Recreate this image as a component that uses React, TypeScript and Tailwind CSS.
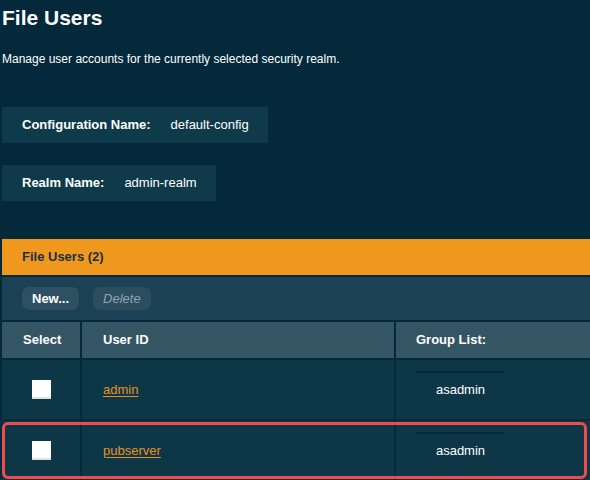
import React from 'react';

const font = "font-['Liberation_Sans',Arial,sans-serif]";

const InfoBox: React.FC<{ label: string; value: string }> = ({ label, value }) => (
    <div className="inline-flex items-center h-[36px] pl-[20px] pr-[19px] bg-[#0e3a4a] text-[13px]">
        <span className="font-bold">{label}</span>
        <span className="ml-[20px]">{value}</span>
    </div>
);

const Checkbox: React.FC = () => (
    <div className="w-[19px] h-[19px] bg-white shadow-[inset_0_-2px_1px_rgba(0,0,0,0.12)]"></div>
);

const UserRow: React.FC<{ id: string; group: string; highlight?: boolean }> = ({ id, group, highlight }) => (
    <div className="relative grid grid-cols-[78px_312px_1fr] gap-[2px] h-[59px]">
        <div className="bg-[#0d3747] flex items-center justify-center">
            <Checkbox />
        </div>
        <div className="bg-[#0d3747] flex items-center pl-[21px] text-[13px]">
            <a href="#" className="text-[#ea8f22] underline underline-offset-[2px]">{id}</a>
        </div>
        <div className="bg-[#0d3747] flex items-center pl-[20px]">
            <div className="w-[89px] h-[38px] border-t-2 border-[#05293a] flex items-center justify-center text-[13px] pb-[2px]">
                {group}
            </div>
        </div>
        {highlight && (
            <div className="absolute left-0 top-[1px] w-[585px] h-[57px] border-[3px] border-[#f24a4a] rounded-[6px]"></div>
        )}
    </div>
);

export default function App() {
    return (
        <div className={`w-[590px] h-[480px] overflow-hidden bg-[#03293b] text-white ${font}`}>
            <div className="pl-[2px]">
                <h1 className="pt-[6px] text-[21px] leading-[24px] font-bold">File Users</h1>
                <p className="mt-[21px] text-[12px] leading-[16px]">Manage user accounts for the currently selected security realm.</p>

                <div className="mt-[40px]">
                    <InfoBox label="Configuration Name:" value="default-config" />
                </div>
                <div className="mt-[22px]">
                    <InfoBox label="Realm Name:" value="admin-realm" />
                </div>

                <div className="mt-[38px] flex flex-col gap-[2px]">
                    <div className="h-[36px] bg-[#f0981d] flex items-center pl-[20px] text-[13px] font-bold text-[#17323f]">
                        File Users (2)
                    </div>
                    <div className="h-[43px] bg-[#1b4254] flex items-center gap-[14px] pl-[20px]">
                        <button className="h-[23px] px-[10px] rounded-[7px] bg-[#2d5163] text-[13px] font-bold text-white">New...</button>
                        <button className="h-[23px] px-[10px] rounded-[7px] bg-[#2a4e5f] text-[13px] italic text-[#8ea4ad]">Delete</button>
                    </div>
                    <div className="grid grid-cols-[78px_312px_1fr] gap-[2px] h-[36px] text-[13px] font-bold">
                        <div className="bg-[#345664] flex items-center pl-[21px]">Select</div>
                        <div className="bg-[#345664] flex items-center pl-[21px]">User ID</div>
                        <div className="bg-[#345664] flex items-center pl-[20px]">Group List:</div>
                    </div>
                    <UserRow id="admin" group="asadmin" />
                    <UserRow id="pubserver" group="asadmin" highlight />
                </div>
            </div>
        </div>
    );
}
